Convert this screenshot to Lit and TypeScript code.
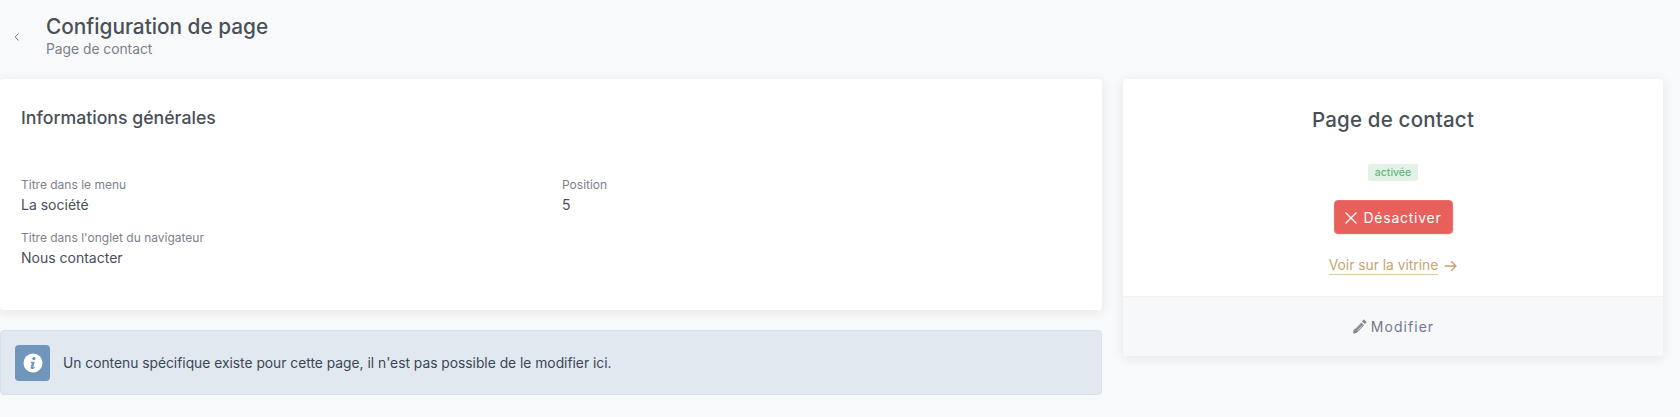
import { LitElement, html, css } from "lit";
import { customElement } from "lit/decorators.js";

@customElement("app-root")
export class AppRoot extends LitElement {
  static styles = css`
    :host { display: block; height: 417px; background: #f8f9fb; font-family: Inter, "Liberation Sans", sans-serif; color: #495057; overflow: hidden; }
    * { box-sizing: border-box; }
    .head { display: flex; align-items: center; height: 79px; padding: 0 0 0 13px; }
    .back { width: 33px; display: flex; }
    .back svg { width: 8px; height: 10px; margin-top: -6px; }
    .head-text { display: flex; flex-direction: column; margin-top: -7px; }
    h1 { margin: 0; font-size: 20.8px; line-height: 26px; font-weight: 500; color: #495057; }
    .sub { font-size: 13.8px; line-height: 17px; color: #7b7f88; margin-top: 1px; }
    .grid { display: grid; grid-template-columns: 1102px 540px; gap: 21px; }
    .left { display: flex; flex-direction: column; gap: 20px; }
    .card { background: #fff; border-radius: 4px; box-shadow: 0 2px 12px rgba(30,32,37,.09); }
    .info { height: 231px; padding: 28px 21px; }
    h2 { margin: 0; font-size: 17.7px; line-height: 22px; font-weight: 500; color: #495057; }
    .fields { display: grid; grid-template-columns: 541px 1fr; margin-top: 48px; row-gap: 15px; }
    .lbl { font-size: 12px; line-height: 16px; color: #7d8189; }
    .val { font-size: 14px; line-height: 20px; color: #495057; margin-top: 2px; }
    .alert { height: 65px; display: flex; align-items: center; gap: 13px; padding-left: 14px; background: #e2e8ef; border: 1px solid #d8e2ec; border-radius: 4px; font-size: 13.8px; color: #3a4656; }
    .alert-ic { width: 35px; height: 36px; background: #7096bc; border-radius: 4px; display: flex; align-items: center; justify-content: center; }
    .alert-ic svg { width: 20px; height: 20px; }
    .side { height: 277px; display: flex; flex-direction: column; }
    .side-body { height: 217px; display: flex; flex-direction: column; align-items: center; padding-top: 28px; }
    .side-title { margin: 0; font-size: 20.5px; line-height: 26px; font-weight: 500; color: #495057; letter-spacing: .2px; }
    .badge { margin-top: 31px; height: 17px; padding: 0 7px; background: #e2f2e6; color: #63b97a; border-radius: 2px; font-size: 10.5px; font-weight: 500; line-height: 17px; }
    .btn { margin-top: 19px; width: 119px; height: 34px; background: #e8605c; color: #fff; border: 1px solid #ea6e6a; border-radius: 4px; font-family: inherit; font-size: 14px; font-weight: 400; letter-spacing: .75px; display: flex; align-items: center; justify-content: center; gap: 5px; padding: 0; box-shadow: 0 1px 2px rgba(30,32,37,.12); }
    .btn svg { width: 14px; height: 14px; margin-top: 2px; }
    .link { margin-top: 22px; display: flex; align-items: center; gap: 6px; font-size: 13.8px; color: #c5a56e; }
    .link span { line-height: 18px; border-bottom: 1px solid #dfcaa6; }
    .link svg { width: 13px; height: 12px; }
    .foot { height: 60px; background: #f7f8fa; border-top: 1px solid #eff1f4; border-radius: 0 0 4px 4px; display: flex; align-items: center; justify-content: center; gap: 4px; font-size: 14px; font-weight: 400; letter-spacing: 1.05px; color: #74788d; }
    .foot svg { width: 15px; height: 15px; }
  `;

  render() {
    return html`
      <div class="head">
        <div class="back">
          <svg viewBox="0 0 8 10" fill="none" stroke="#74788d" stroke-width="1"><path d="M5.5 1.5 2.2 5l3.3 3.5"/></svg>
        </div>
        <div class="head-text">
          <h1>Configuration de page</h1>
          <div class="sub">Page de contact</div>
        </div>
      </div>
      <div class="grid">
        <div class="left">
          <div class="card info">
            <h2>Informations générales</h2>
            <div class="fields">
              <div><div class="lbl">Titre dans le menu</div><div class="val">La société</div></div>
              <div><div class="lbl">Position</div><div class="val">5</div></div>
              <div><div class="lbl">Titre dans l'onglet du navigateur</div><div class="val">Nous contacter</div></div>
            </div>
          </div>
          <div class="alert">
            <div class="alert-ic">
              <svg viewBox="0 0 20 20">
                <circle cx="10" cy="10" r="9.5" fill="#fff"/>
                <circle cx="10.9" cy="5.6" r="1.7" fill="#7096bc"/>
                <path d="M7.6 8.8h4.1l-1.5 5.2c-.1.4.3.5.6.3l.8-.5.3.6c-1 1-1.9 1.5-3 1.5-1 0-1.5-.6-1.2-1.6l1-3.6c.1-.4-.1-.6-.9-.7z" fill="#7096bc"/>
              </svg>
            </div>
            <div>Un contenu spécifique existe pour cette page, il n'est pas possible de le modifier ici.</div>
          </div>
        </div>
        <div class="card side">
          <div class="side-body">
            <h3 class="side-title">Page de contact</h3>
            <div class="badge">activée</div>
            <button class="btn">
              <svg viewBox="0 0 14 14" fill="none" stroke="#fff" stroke-width="1.3"><path d="M1.5 1.5l11 11M12.5 1.5l-11 11"/></svg>
              Désactiver
            </button>
            <div class="link">
              <span>Voir sur la vitrine</span>
              <svg viewBox="0 0 13 12" fill="none" stroke="#c5a56e" stroke-width="1.4"><path d="M.5 6h11.2M7.2 1.3 11.9 6l-4.7 4.7"/></svg>
            </div>
          </div>
          <div class="foot">
            <svg viewBox="0 0 15 15" fill="#85888f"><path d="M11.2.9a1 1 0 0 1 1.4 0l1.5 1.5a1 1 0 0 1 0 1.4l-1.3 1.3-2.9-2.9zM9.2 3.4l2.9 2.9-7.6 7.6-3.5.7.7-3.6z"/><path d="M3.4 9.8 8.8 4.4M5.2 11.6l5.4-5.4" stroke="#f7f8fa" stroke-width=".6"/></svg>
            Modifier
          </div>
        </div>
      </div>
    `;
  }
}
